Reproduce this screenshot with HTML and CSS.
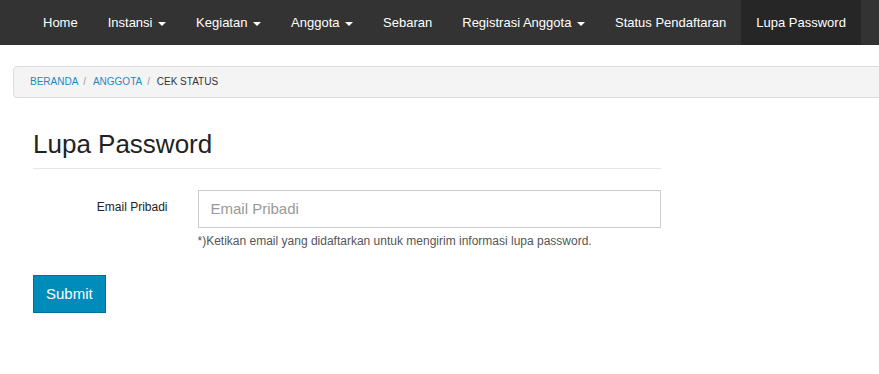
FILE: index.html
```html
<!DOCTYPE html>
<html>
<head>
<meta charset="utf-8">
<link rel="stylesheet" href="styles.css">
</head>
<body>
<nav class="navbar">
  <ul class="nav">
    <li><a href="#">Home</a></li>
    <li><a href="#">Instansi <span class="caret"></span></a></li>
    <li><a href="#">Kegiatan <span class="caret"></span></a></li>
    <li><a href="#">Anggota <span class="caret"></span></a></li>
    <li><a href="#">Sebaran</a></li>
    <li><a href="#">Registrasi Anggota <span class="caret"></span></a></li>
    <li><a href="#">Status Pendaftaran</a></li>
    <li class="active"><a href="#">Lupa Password</a></li>
  </ul>
</nav>
<ol class="breadcrumb">
  <li><a href="#">Beranda</a></li>
  <li><a href="#">Anggota</a></li>
  <li class="current">Cek Status</li>
</ol>
<main class="content">
  <h1 class="page-title">Lupa Password</h1>
  <form class="form">
    <div class="form-row">
      <label class="form-label" for="email">Email Pribadi</label>
      <div class="form-field">
        <input id="email" class="form-input" type="text" placeholder="Email Pribadi">
        <p class="help">*)Ketikan email yang didaftarkan untuk mengirim informasi lupa password.</p>
      </div>
    </div>
    <button type="button" class="btn">Submit</button>
  </form>
</main>
</body>
</html>
```
FILE: styles.css
```css
html, body {
  margin: 0;
  padding: 0;
  background: #fff;
  overflow-x: hidden;
}
body {
  font-family: "Liberation Sans", Arial, sans-serif;
  color: #222;
}
.navbar {
  background: #333333;
  height: 45px;
}
.nav {
  list-style: none;
  margin: 0;
  padding: 0 0 0 28px;
  display: flex;
  height: 45px;
}
.nav li a {
  display: block;
  height: 45px;
  line-height: 45px;
  padding: 0 15px;
  color: #fff;
  font-size: 13px;
  text-decoration: none;
  white-space: nowrap;
}
.nav li.active a {
  background: #262626;
}
.caret {
  display: inline-block;
  width: 0;
  height: 0;
  margin-left: 2px;
  vertical-align: middle;
  border-top: 4px solid #fff;
  border-left: 4px solid transparent;
  border-right: 4px solid transparent;
}
.breadcrumb {
  list-style: none;
  margin: 21px -20px 0 13px;
  padding: 0 16px;
  height: 30px;
  line-height: 30px;
  background: #f4f4f4;
  border: 1px solid #dddddd;
  border-radius: 4px;
  font-size: 10px;
  text-transform: uppercase;
  display: flex;
}
.breadcrumb li + li::before {
  content: "/\00a0";
  padding: 0 4px 0 5px;
  color: #999;
}
.breadcrumb a {
  color: #1a8ac6;
  text-decoration: none;
}
.breadcrumb .current {
  color: #333;
}
.content {
  width: 628px;
  margin-left: 33px;
}
.page-title {
  margin: 32px 0 0;
  padding-bottom: 9px;
  font-size: 26px;
  font-weight: normal;
  line-height: 1.1;
  color: #222;
  border-bottom: 1px solid #e6e6e6;
}
.form {
  margin-top: 21px;
}
.form-row {
  display: flex;
}
.form-label {
  width: 134.5px;
  padding-top: 10px;
  text-align: right;
  font-size: 12px;
  color: #222;
}
.form-field {
  margin-left: 30px;
  flex: 1;
}
.form-input {
  display: block;
  box-sizing: border-box;
  width: 100%;
  height: 38px;
  margin: 0;
  padding: 0 12px;
  border: 1px solid #cccccc;
  border-radius: 0;
  font-family: "Liberation Sans", Arial, sans-serif;
  font-size: 15px;
  color: #333;
  outline: none;
}
.form-input::placeholder {
  color: #999;
}
.help {
  margin: 5px 0 0;
  font-size: 12px;
  line-height: 17px;
  color: #555;
}
.btn {
  display: block;
  margin-top: 25px;
  height: 38px;
  padding: 0 12px;
  background: #008cba;
  border: 1px solid #007095;
  border-radius: 0;
  color: #fff;
  font-family: "Liberation Sans", Arial, sans-serif;
  font-size: 15px;
  cursor: pointer;
}
```
